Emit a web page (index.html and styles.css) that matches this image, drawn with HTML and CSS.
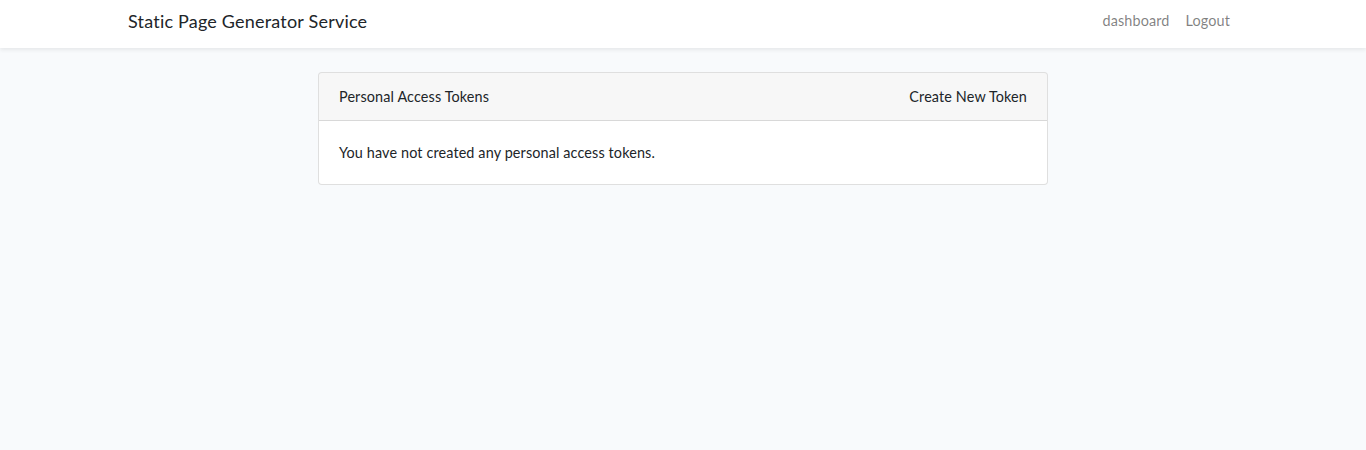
FILE: index.html
```html
<!DOCTYPE html>
<html lang="en">
<head>
<meta charset="utf-8">
<title>Static Page Generator Service</title>
<link rel="stylesheet" href="styles.css">
</head>
<body>
<nav class="navbar">
  <div class="container nav-inner">
    <a class="brand" href="#">Static Page Generator Service</a>
    <ul class="nav-links">
      <li><a class="nav-link" href="#">dashboard</a></li>
      <li><a class="nav-link" href="#">Logout</a></li>
    </ul>
  </div>
</nav>
<main class="main">
  <div class="container row">
    <div class="card">
      <div class="card-header">
        <span>Personal Access Tokens</span>
        <a class="header-link" href="#">Create New Token</a>
      </div>
      <div class="card-body">
        <p class="empty">You have not created any personal access tokens.</p>
      </div>
    </div>
  </div>
</main>
</body>
</html>
```

FILE: styles.css
```css
* { box-sizing: border-box; }
html, body { margin: 0; }
body {
  background: #f8fafc;
  font-family: Lato, "Open Sans", sans-serif;
  font-size: 14.4px;
  line-height: 1.6;
  color: #212529;
  letter-spacing: 0.13px;
}
a { text-decoration: none; }
.container {
  width: 1140px;
  margin: 0 auto;
  padding: 0 15px;
}
.navbar {
  background: #fff;
  height: 48px;
  box-shadow: 0 2px 4px rgba(0,0,0,0.075);
}
.nav-inner {
  height: 48px;
  display: flex;
  align-items: center;
  justify-content: space-between;
}
.brand {
  color: #212529;
  font-size: 18px;
  line-height: 28px;
  margin-top: -6px;
  letter-spacing: 0.2px;
}
.nav-links {
  list-style: none;
  margin: 0;
  padding: 0 8px 0 0;
  display: flex;
  gap: 16px;
  margin-top: -7px;
}
.nav-link {
  color: rgba(0,0,0,0.5);
  font-size: 14.4px;
}
.main { padding: 24px 0; }
.row { display: flex; justify-content: center; }
.card {
  width: 730px;
  background: #fff;
  border: 1px solid rgba(0,0,0,0.125);
  border-radius: 4px;
  overflow: hidden;
}
.card-header {
  display: flex;
  justify-content: space-between;
  align-items: center;
  padding: 12px 20px;
  background: rgba(0,0,0,0.03);
  border-bottom: 1px solid rgba(0,0,0,0.125);
}
.header-link { color: #212529; }
.card-body { padding: 20px; }
.empty { margin: 0; }
```
